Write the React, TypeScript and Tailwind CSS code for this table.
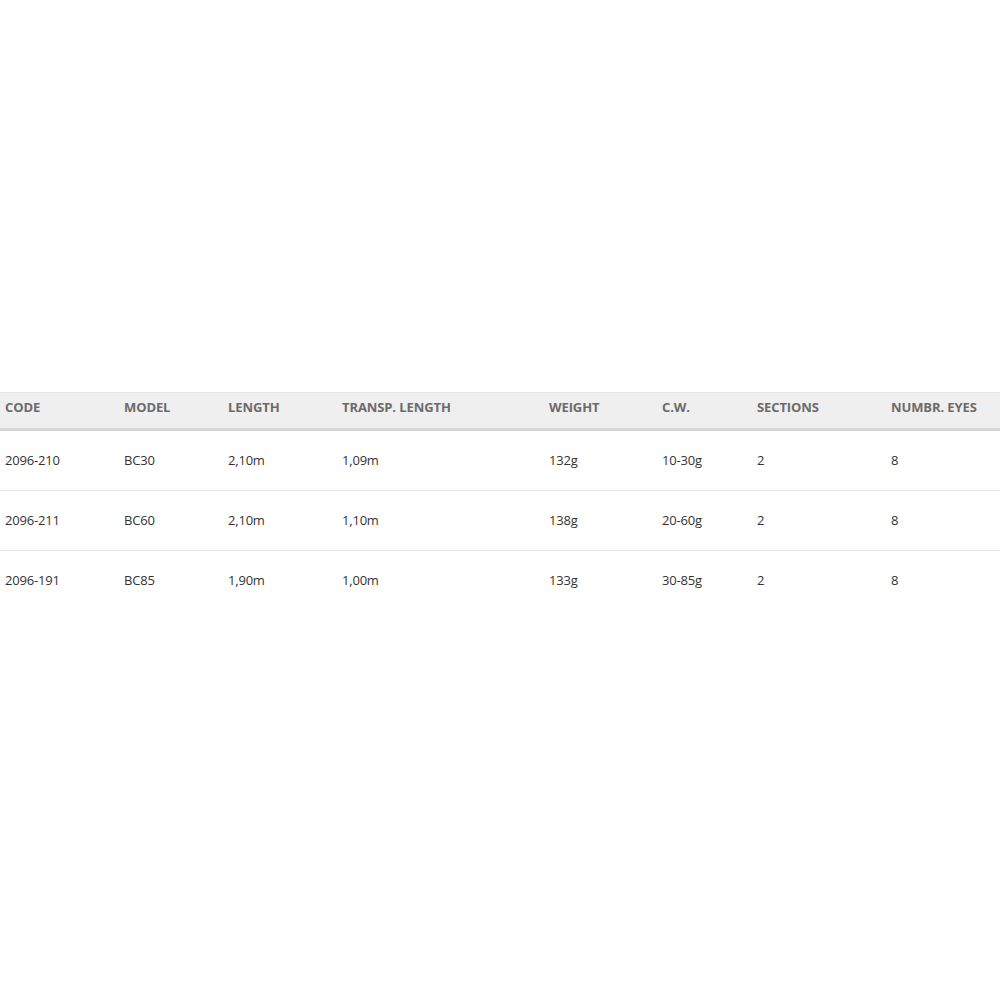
import React from "react";

const headers = ["CODE", "MODEL", "LENGTH", "TRANSP. LENGTH", "WEIGHT", "C.W.", "SECTIONS", "NUMBR. EYES"];
const rows = [
  ["2096-210", "BC30", "2,10m", "1,09m", "132g", "10-30g", "2", "8"],
  ["2096-211", "BC60", "2,10m", "1,10m", "138g", "20-60g", "2", "8"],
  ["2096-191", "BC85", "1,90m", "1,00m", "133g", "30-85g", "2", "8"],
];

const grid = "grid grid-cols-[119px_104px_114px_207px_113px_95px_134px_1fr] pl-[5px]";

export default function App() {
  return (
    <div className="w-[1000px] h-[1000px] bg-white pt-[392px]" style={{ fontFamily: '"Open Sans", "Noto Sans", sans-serif' }}>
      <div className="border-t border-[#e4e4e4] bg-[#efefef] border-b-[3px] border-b-[#d5d5d5]">
        <div className={`${grid} h-[35px] pb-[6px] items-center`}>
          {headers.map((h) => (
            <div key={h} className="text-[13px] font-bold text-[#6b6b6b] tracking-[-0.1px]">{h}</div>
          ))}
        </div>
      </div>
      {rows.map((r, i) => (
        <div key={i} className={`${i < rows.length - 1 ? "border-b border-[#e6e6e6]" : ""}`}>
          <div className={`${grid} h-[59px] items-center`}>
            {r.map((c, j) => (
              <div key={j} className="text-[13px] text-[#333333] tracking-[-0.2px]">{c}</div>
            ))}
          </div>
        </div>
      ))}
    </div>
  );
}
